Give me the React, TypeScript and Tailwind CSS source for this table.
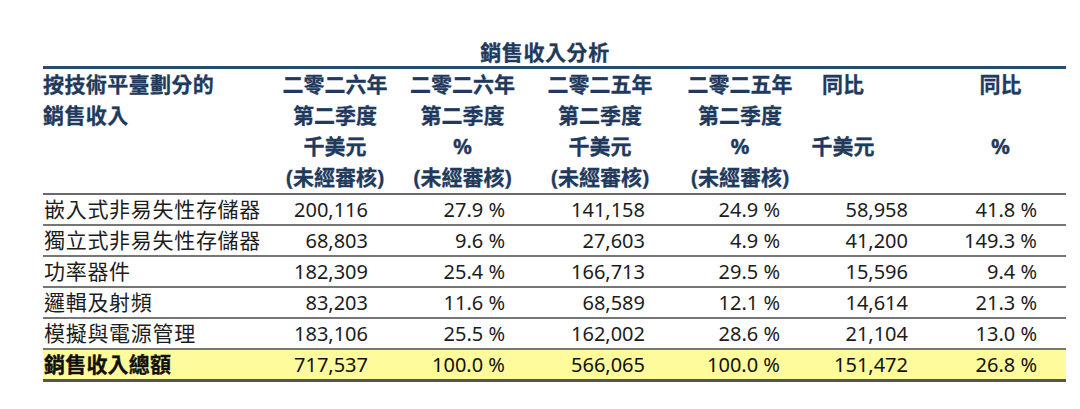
import React from "react";

const cols = "grid grid-cols-[232px_120px_135px_140px_140px_125px_131px]";
const valPads = ["pr-[27px]", "pr-[25px]", "pr-[25px]", "pr-[30px]", "pr-[27px]", "pr-[29px]"];

const headers: { lines: string[]; extra?: string }[] = [
  { lines: ["二零二六年", "第二季度", "千美元", "(未經審核)"] },
  { lines: ["二零二六年", "第二季度", "%", "(未經審核)"] },
  { lines: ["二零二五年", "第二季度", "千美元", "(未經審核)"] },
  { lines: ["二零二五年", "第二季度", "%", "(未經審核)"] },
  { lines: ["同比", "\u00a0", "千美元", "\u00a0"], extra: "pr-[59px]" },
  { lines: ["同比", "\u00a0", "%", "\u00a0"] },
];

const rows: string[][] = [
  ["嵌入式非易失性存儲器", "200,116", "27.9 %", "141,158", "24.9 %", "58,958", "41.8 %"],
  ["獨立式非易失性存儲器", "68,803", "9.6 %", "27,603", "4.9 %", "41,200", "149.3 %"],
  ["功率器件", "182,309", "25.4 %", "166,713", "29.5 %", "15,596", "9.4 %"],
  ["邏輯及射頻", "83,203", "11.6 %", "68,589", "12.1 %", "14,614", "21.3 %"],
  ["模擬與電源管理", "183,106", "25.5 %", "162,002", "28.6 %", "21,104", "13.0 %"],
];
const total = ["銷售收入總額", "717,537", "100.0 %", "566,065", "100.0 %", "151,472", "26.8 %"];

export default function App() {
  return (
    <div className="w-[1080px] h-[409px] bg-white pt-[38px] pl-[43px] font-['Noto_Sans','Noto_Sans_CJK_TC',sans-serif]">
      <div className="w-[1023px]">
        <div className="flex justify-center pr-[19px] h-[28px] leading-[28px] text-[21px] font-bold tracking-[0.6px] text-[#1f3a5c] [-webkit-text-stroke:0.3px]">
          銷售收入分析
        </div>
        <div className="border-t-[3px] border-[#2b4a6f]" />
        <div className={`${cols} border-b-[2px] border-[#6a6a6a] text-[21px] leading-[31px] font-bold text-[#1f3a5c] [-webkit-text-stroke:0.3px]`}>
          <div className="flex flex-col tracking-[0.4px]">
            <span>按技術平臺劃分的</span>
            <span>銷售收入</span>
          </div>
          {headers.map((h, i) => (
            <div key={i} className={`flex flex-col items-center ${h.extra ?? ""}`}>
              {h.lines.map((l, j) => (
                <span key={j} className="whitespace-nowrap">
                  {l}
                </span>
              ))}
            </div>
          ))}
        </div>
        {rows.map((r, i) => (
          <div
            key={i}
            className={`${cols} h-[31px] items-center border-b-[2px] border-[#767676] text-[20px] leading-[29px] text-[#1c1c1c]`}
          >
            <div className="text-[21px] tracking-[0.7px] pl-[1px] whitespace-nowrap">{r[0]}</div>
            {r.slice(1).map((v, j) => (
              <div key={j} className={`text-right whitespace-nowrap ${valPads[j]}`}>
                {v}
              </div>
            ))}
          </div>
        ))}
        <div
          className={`${cols} h-[32px] items-center bg-[#fefb9c] border-b-[3px] border-[#555555] text-[20px] leading-[29px] text-[#111111]`}
        >
          <div className="text-[21px] tracking-[0.2px] font-bold pl-[1px] whitespace-nowrap [-webkit-text-stroke:0.3px]">{total[0]}</div>
          {total.slice(1).map((v, j) => (
            <div key={j} className={`text-right whitespace-nowrap ${valPads[j]}`}>
              {v}
            </div>
          ))}
        </div>
      </div>
    </div>
  );
}
